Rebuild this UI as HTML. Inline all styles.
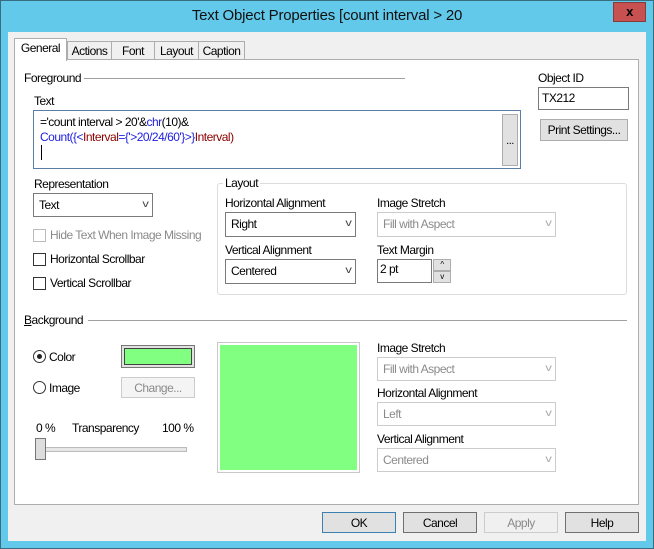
<!DOCTYPE html>
<html><head><meta charset="utf-8"><style>
*{box-sizing:border-box}
body{margin:0;width:654px;height:549px;overflow:hidden;font-family:"Liberation Sans",sans-serif;font-size:12px;color:#000;background:#62c9ea;position:relative;letter-spacing:-0.5px}
.a{position:absolute;white-space:nowrap}
.frame{position:absolute;left:0;top:0;width:654px;height:549px;border:1px solid #3a6c80;background:#62c9ea}
.client{position:absolute;left:8px;top:32px;width:638px;height:509px;background:#f0f0f0}
.panel{position:absolute;left:14px;top:59px;width:625px;height:446px;background:#fff;border:1px solid #adadad}
.tab{position:absolute;top:41px;height:19px;background:#f0f0f0;border:1px solid #adadad;border-bottom:none;padding-top:2px;text-align:center}
.sel{position:absolute;border:1px solid #7a7a7a;background:#fff;padding:4px 0 0 5px}
.sel.d{border-color:#cccccc;color:#8a8a8a}
.arr{position:absolute;right:5px;top:5px;font-size:10px;color:#444;transform:scaleX(1.3)}
.d .arr{color:#aaa}
.btn{position:absolute;background:#e1e1e1;border:1px solid #adadad;text-align:center;padding-top:3px}
.cb{position:absolute;width:13px;height:13px;border:1px solid #333;background:#fff}
.line{position:absolute;height:1px;background:#a0a0a0}
</style></head><body>
<div class="frame"></div>
<div class="a" style="left:0;top:7px;width:654px;text-align:center;font-size:15px;color:#111;letter-spacing:-0.2px">Text Object Properties [count interval &gt; 20</div>
<div class="a" style="left:613px;top:2px;width:33px;height:20px;background:#c75050;border:1px solid #8a3a3a;color:#000;font-weight:bold;text-align:center;font-size:13px;line-height:18px">x</div>
<div class="client"></div>
<div class="tab" style="left:67px;width:45px">Actions</div>
<div class="tab" style="left:111px;width:44px">Font</div>
<div class="tab" style="left:154px;width:45px">Layout</div>
<div class="tab" style="left:198px;width:47px">Caption</div>
<div class="panel"></div>
<div class="tab" style="left:14px;top:38px;width:53px;height:23px;background:#fff;z-index:2">General</div>

<div class="a" style="left:24px;top:71px">Foreground</div>
<div class="line" style="left:84px;top:78px;width:321px"></div>
<div class="a" style="left:34px;top:94px">Text</div>
<div class="a" style="left:33px;top:110px;width:488px;height:59px;border:1px solid #5a7ea8;background:#fff"></div>
<div class="a" style="left:40px;top:115px;line-height:15px">='count interval &gt; 20'&amp;<span style="color:#2020e0">chr</span>(10)&amp;<br><span style="color:#2020e0">Count({&lt;</span><span style="color:#8b0000">Interval</span><span style="color:#2020e0">={'&gt;20/24/60'}&gt;}</span><span style="color:#8b0000">Interval)</span></div>
<div class="a" style="left:41px;top:145px;width:1px;height:15px;background:#000"></div>
<div class="btn" style="left:502px;top:114px;width:16px;height:52px;padding-top:20px;font-size:11px">...</div>

<div class="a" style="left:538px;top:71px">Object ID</div>
<div class="a" style="left:538px;top:87px;width:91px;height:23px;border:1px solid #7a7a7a;background:#fff;padding:3px 0 0 3px">TX212</div>
<div class="btn" style="left:540px;top:119px;width:88px;height:22px">Print Settings...</div>

<div class="a" style="left:34px;top:177px">Representation</div>
<div class="sel" style="left:33px;top:193px;width:120px;height:24px">Text<span class="arr">v</span></div>
<div class="cb" style="left:33px;top:229px;border-color:#bbb"></div>
<div class="a" style="left:50px;top:228px;color:#8a8a8a">Hide Text When Image Missing</div>
<div class="cb" style="left:33px;top:253px"></div>
<div class="a" style="left:50px;top:252px">Horizontal Scrollbar</div>
<div class="cb" style="left:33px;top:277px"></div>
<div class="a" style="left:50px;top:276px">Vertical Scrollbar</div>

<div class="a" style="left:217px;top:183px;width:410px;height:112px;border:1px solid #dcdcdc;border-radius:3px"></div>
<div class="a" style="left:223px;top:176px;background:#fff;padding:0 2px">Layout</div>
<div class="a" style="left:225px;top:196px">Horizontal Alignment</div>
<div class="sel" style="left:225px;top:212px;width:131px;height:25px">Right<span class="arr">v</span></div>
<div class="a" style="left:225px;top:243px">Vertical Alignment</div>
<div class="sel" style="left:225px;top:259px;width:131px;height:25px">Centered<span class="arr">v</span></div>
<div class="a" style="left:377px;top:196px">Image Stretch</div>
<div class="sel d" style="left:377px;top:212px;width:179px;height:25px">Fill with Aspect<span class="arr">v</span></div>
<div class="a" style="left:377px;top:243px">Text Margin</div>
<div class="a" style="left:377px;top:259px;width:55px;height:24px;border:1px solid #7a7a7a;background:#fff;padding:2px 0 0 2px">2 pt</div>
<div class="btn" style="left:433px;top:259px;width:18px;height:12px;font-size:8px;padding:0">^</div>
<div class="btn" style="left:433px;top:271px;width:18px;height:12px;font-size:8px;padding:0">v</div>

<div class="a" style="left:24px;top:313px"><u>B</u>ackground</div>
<div class="line" style="left:88px;top:320px;width:539px"></div>
<div class="a" style="left:33px;top:350px;width:13px;height:13px;border:1px solid #333;border-radius:50%;background:#fff"></div>
<div class="a" style="left:37px;top:354px;width:5px;height:5px;border-radius:50%;background:#222"></div>
<div class="a" style="left:49px;top:350px">Color</div>
<div class="a" style="left:121px;top:345px;width:74px;height:23px;border:1px solid #777;background:#e1e1e1;padding:2px"><div style="width:100%;height:100%;border:1px solid #444;background:#80ff80"></div></div>
<div class="a" style="left:33px;top:381px;width:13px;height:13px;border:1px solid #333;border-radius:50%;background:#fff"></div>
<div class="a" style="left:49px;top:381px">Image</div>
<div class="btn" style="left:121px;top:377px;width:74px;height:21px;color:#8a8a8a;background:#f4f4f4;border-color:#ccc">Change...</div>
<div class="a" style="left:36px;top:421px">0 %</div>
<div class="a" style="left:72px;top:421px">Transparency</div>
<div class="a" style="left:162px;top:421px">100 %</div>
<div class="a" style="left:45px;top:447px;width:142px;height:5px;border:1px solid #bbb;background:#e7e7e7"></div>
<div class="a" style="left:35px;top:438px;width:11px;height:22px;border:1px solid #777;background:#ddd"></div>

<div class="a" style="left:217px;top:342px;width:143px;height:131px;border:1px solid #c8c8c8;padding:2px"><div style="width:100%;height:100%;background:#80ff80"></div></div>

<div class="a" style="left:377px;top:341px">Image Stretch</div>
<div class="sel d" style="left:377px;top:357px;width:179px;height:24px">Fill with Aspect<span class="arr">v</span></div>
<div class="a" style="left:377px;top:386px">Horizontal Alignment</div>
<div class="sel d" style="left:377px;top:402px;width:179px;height:24px">Left<span class="arr">v</span></div>
<div class="a" style="left:377px;top:432px">Vertical Alignment</div>
<div class="sel d" style="left:377px;top:448px;width:179px;height:24px">Centered<span class="arr">v</span></div>

<div class="btn" style="left:322px;top:512px;width:74px;height:21px;border-color:#3c7fb1">OK</div>
<div class="btn" style="left:403px;top:512px;width:74px;height:21px;border-color:#707070">Cancel</div>
<div class="btn" style="left:484px;top:512px;width:74px;height:21px;color:#8a8a8a;background:#f0f0f0;border-color:#ccc">Apply</div>
<div class="btn" style="left:565px;top:512px;width:74px;height:21px;border-color:#707070">Help</div>
</body></html>
